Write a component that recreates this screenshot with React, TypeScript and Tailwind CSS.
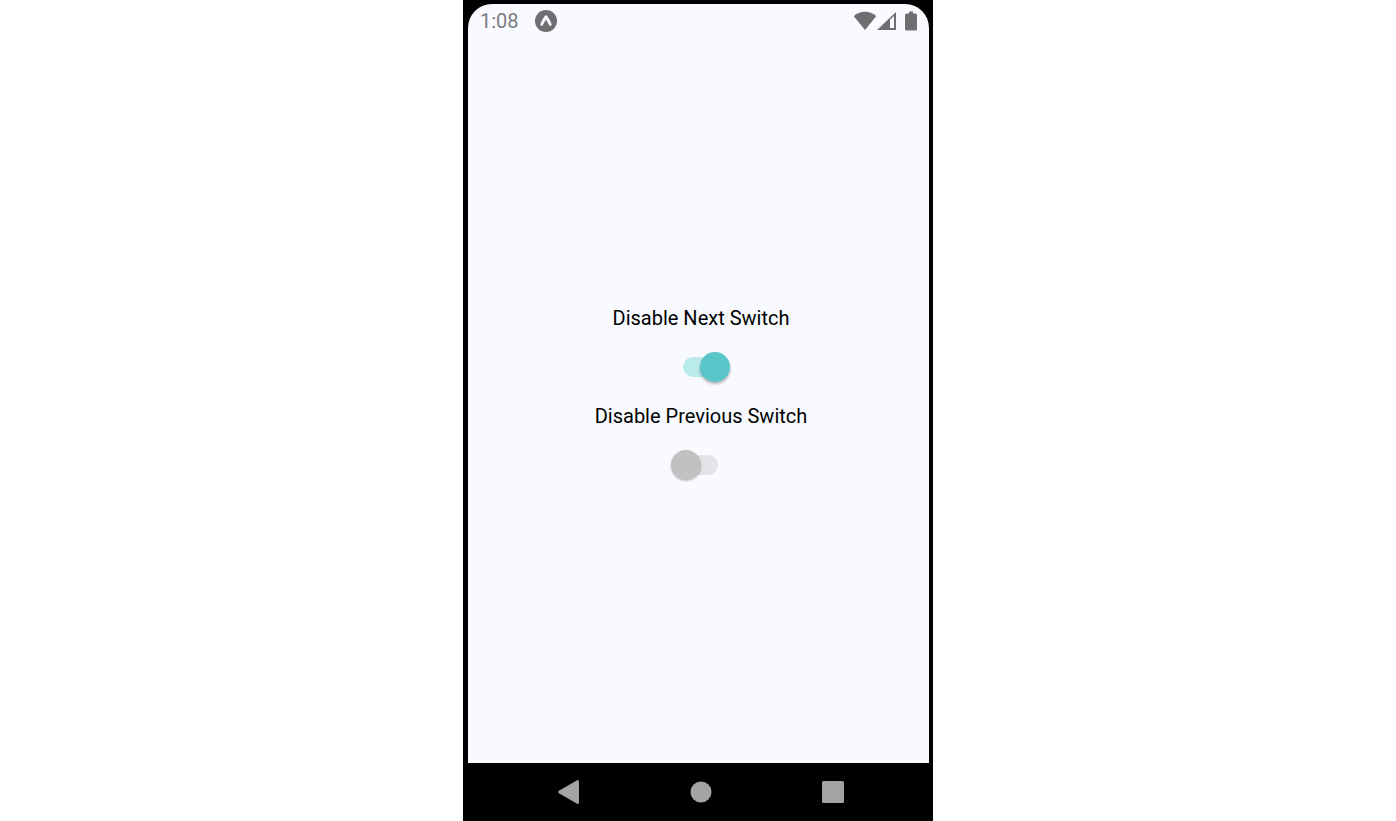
import { useId, useState } from 'react';

interface LabeledSwitchProps {
  label: string;
  checked: boolean;
  disabled?: boolean;
  onChange: (checked: boolean) => void;
}

function LabeledSwitch({ label, checked, disabled = false, onChange }: LabeledSwitchProps) {
  const id = useId();

  return (
    <div className="flex flex-col items-center gap-5">
      <label htmlFor={id} className="text-[20px] leading-7 text-black">
        {label}
      </label>
      <input
        id={id}
        type="checkbox"
        role="switch"
        checked={checked}
        disabled={disabled}
        onChange={(e) => onChange(e.target.checked)}
        className="relative block h-[30px] w-[59px] appearance-none before:absolute before:left-3 before:top-[5px] before:h-5 before:w-[35px] before:rounded-full before:bg-[#e3e3e8] after:absolute after:left-0 after:top-0 after:size-[30px] after:rounded-full after:bg-[#c1c1c1] after:shadow-[0_1px_2px_rgba(0,0,0,0.25)] after:transition-[left] checked:before:bg-[#b9ebed] checked:after:left-[29px] checked:after:bg-[#59c5c8] checked:after:shadow-[0_2px_3px_rgba(0,0,0,0.3)]"
      />
    </div>
  );
}

function StatusBar() {
  return (
    <header className="flex h-[34px] items-center justify-between px-3 text-[#6f6f72]">
      <div className="flex items-center gap-4">
        <span className="text-[20px] leading-7 text-[#7c7c7f]">1:08</span>
        <svg className="size-[22px]" viewBox="0 0 22 22">
          <circle cx="11" cy="11" r="11" fill="currentColor" />
          <path
            d="M9.9 5.800Q11 4.600 12.100 5.800 14.800 9.600 16.600 14q.3 1.200-.7 1.800-.9.400-1.600-.5L11 9.600l-3.300 5.700q-.7.9-1.600.5-1-.6-.7-1.800Q7.200 9.600 9.900 5.800Z"
            fill="#f9faff"
          />
        </svg>
      </div>
      <div className="flex items-center">
        <svg className="h-5 w-6" viewBox="0 0 24 20" fill="currentColor">
          <path d="M12 19 .8 5.200C3.600 2.400 7.500.8 12 .8s8.400 1.600 11.200 4.400Z" />
        </svg>
        <svg className="h-5 w-5" viewBox="0 0 20 20" fill="currentColor">
          <path fillRule="evenodd" d="M0 19 19 1v18ZM13 8.800V17h4V5Z" />
        </svg>
        <svg className="ml-2 h-5 w-3" viewBox="0 0 12 20" fill="currentColor">
          <path d="M4 .5h4v2h2.500Q12 2.500 12 4v14q0 1.500-1.500 1.500h-9Q0 19.500 0 18V4q0-1.500 1.500-1.500H4Z" />
        </svg>
      </div>
    </header>
  );
}

function NavBar() {
  return (
    <nav className="flex h-[58px] items-center justify-center gap-[108px] bg-black pl-1 text-[#a3a3a3]">
      <button type="button" aria-label="Back">
        <svg className="size-6" viewBox="0 0 24 24" fill="currentColor">
          <path d="M20.500 0Q22 0 22 1.500v21q0 1.500-1.500 1.500L1.500 13Q.5 12 1.500 11Z" />
        </svg>
      </button>
      <button type="button" aria-label="Home">
        <svg className="size-6" viewBox="0 0 24 24" fill="currentColor">
          <circle cx="12" cy="12" r="10.500" />
        </svg>
      </button>
      <button type="button" aria-label="Overview">
        <svg className="size-6" viewBox="0 0 24 24" fill="currentColor">
          <rect x="1" y="1" width="22" height="22" rx="1.500" />
        </svg>
      </button>
    </nav>
  );
}

export default function App() {
  const [nextDisabled, setNextDisabled] = useState(true);
  const [previousDisabled, setPreviousDisabled] = useState(false);

  return (
    <div className="flex min-h-screen justify-center bg-white font-['Roboto',sans-serif]">
      <div className="flex w-full max-w-[470px] flex-col bg-black pl-[5px] pr-1 pt-1">
        <div className="flex flex-1 flex-col rounded-t-[24px] bg-[#f9faff]">
          <StatusBar />
          <main className="flex flex-1 flex-col items-center justify-center gap-5 pb-[18px] pl-[5px]">
            <LabeledSwitch
              label="Disable Next Switch"
              checked={nextDisabled}
              disabled={previousDisabled}
              onChange={setNextDisabled}
            />
            <LabeledSwitch
              label="Disable Previous Switch"
              checked={previousDisabled}
              disabled={nextDisabled}
              onChange={setPreviousDisabled}
            />
          </main>
        </div>
        <NavBar />
      </div>
    </div>
  );
}
